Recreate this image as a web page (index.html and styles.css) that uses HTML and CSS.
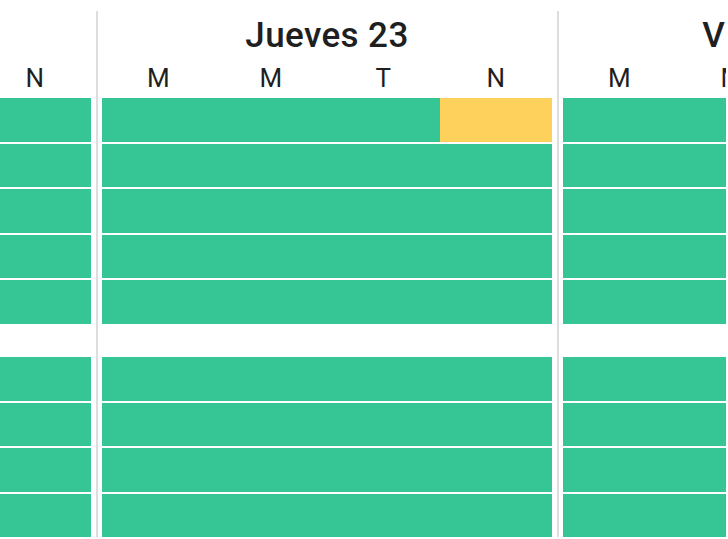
FILE: index.html
```html
<!DOCTYPE html>
<html lang="es">
<head>
<meta charset="utf-8">
<title>Calendario</title>
<link rel="stylesheet" href="styles.css">
</head>
<body>
<div class="viewport">
  <div class="days">
    <section class="day">
      <h2 class="day-title">Miércoles 22</h2>
      <div class="shifts"><span>M</span><span>M</span><span>T</span><span>N</span></div>
      <div class="group">
        <div class="row"><i></i><i></i><i></i><i></i></div>
        <div class="row"><i></i><i></i><i></i><i></i></div>
        <div class="row"><i></i><i></i><i></i><i></i></div>
        <div class="row"><i></i><i></i><i></i><i></i></div>
        <div class="row"><i></i><i></i><i></i><i></i></div>
      </div>
      <div class="group">
        <div class="row"><i></i><i></i><i></i><i></i></div>
        <div class="row"><i></i><i></i><i></i><i></i></div>
        <div class="row"><i></i><i></i><i></i><i></i></div>
        <div class="row"><i></i><i></i><i></i><i></i></div>
      </div>
    </section>
    <section class="day">
      <h2 class="day-title">Jueves 23</h2>
      <div class="shifts"><span>M</span><span>M</span><span>T</span><span>N</span></div>
      <div class="group">
        <div class="row"><i></i><i></i><i></i><i class="warn"></i></div>
        <div class="row"><i></i><i></i><i></i><i></i></div>
        <div class="row"><i></i><i></i><i></i><i></i></div>
        <div class="row"><i></i><i></i><i></i><i></i></div>
        <div class="row"><i></i><i></i><i></i><i></i></div>
      </div>
      <div class="group">
        <div class="row"><i></i><i></i><i></i><i></i></div>
        <div class="row"><i></i><i></i><i></i><i></i></div>
        <div class="row"><i></i><i></i><i></i><i></i></div>
        <div class="row"><i></i><i></i><i></i><i></i></div>
      </div>
    </section>
    <section class="day">
      <h2 class="day-title">Viernes 24</h2>
      <div class="shifts"><span>M</span><span>M</span><span>T</span><span>N</span></div>
      <div class="group">
        <div class="row"><i></i><i></i><i></i><i></i></div>
        <div class="row"><i></i><i></i><i></i><i></i></div>
        <div class="row"><i></i><i></i><i></i><i></i></div>
        <div class="row"><i></i><i></i><i></i><i></i></div>
        <div class="row"><i></i><i></i><i></i><i></i></div>
      </div>
      <div class="group">
        <div class="row"><i></i><i></i><i></i><i></i></div>
        <div class="row"><i></i><i></i><i></i><i></i></div>
        <div class="row"><i></i><i></i><i></i><i></i></div>
        <div class="row"><i></i><i></i><i></i><i></i></div>
      </div>
    </section>
  </div>
</div>
</body>
</html>
```
FILE: styles.css
```css
html, body {
  margin: 0;
  padding: 0;
  background: #ffffff;
  overflow: hidden;
}
body {
  font-family: Roboto, "Noto Sans", "Liberation Sans", sans-serif;
  color: #1f1f1f;
  width: 728px;
  height: 539px;
}
.viewport {
  width: 726px;
  height: 539px;
  overflow: hidden;
}
.days {
  display: flex;
  margin-left: -365px;
  padding-top: 11px;
}
.day {
  flex: 0 0 auto;
  width: 450px;
  padding: 0 5px 0 4px;
  border-left: 2px solid #dddddd;
}
.day-title {
  margin: 0;
  padding-top: 3px;
  height: 44px;
  line-height: 44px;
  font-size: 35px;
  letter-spacing: 0.4px;
  font-weight: 500;
  text-align: center;
  white-space: nowrap;
}
.shifts {
  display: flex;
  height: 40px;
  line-height: 40px;
  font-size: 26px;
  font-weight: 400;
}
.shifts span {
  flex: 1 1 0;
  text-align: center;
}
.group {
  display: flex;
  flex-direction: column;
  gap: 2px;
}
.group + .group {
  margin-top: 33.5px;
}
.row {
  display: flex;
  height: 43.5px;
}
.row i {
  flex: 1 1 0;
  background: #36c594;
}
.row i.warn {
  background: #fdd15b;
}
```
